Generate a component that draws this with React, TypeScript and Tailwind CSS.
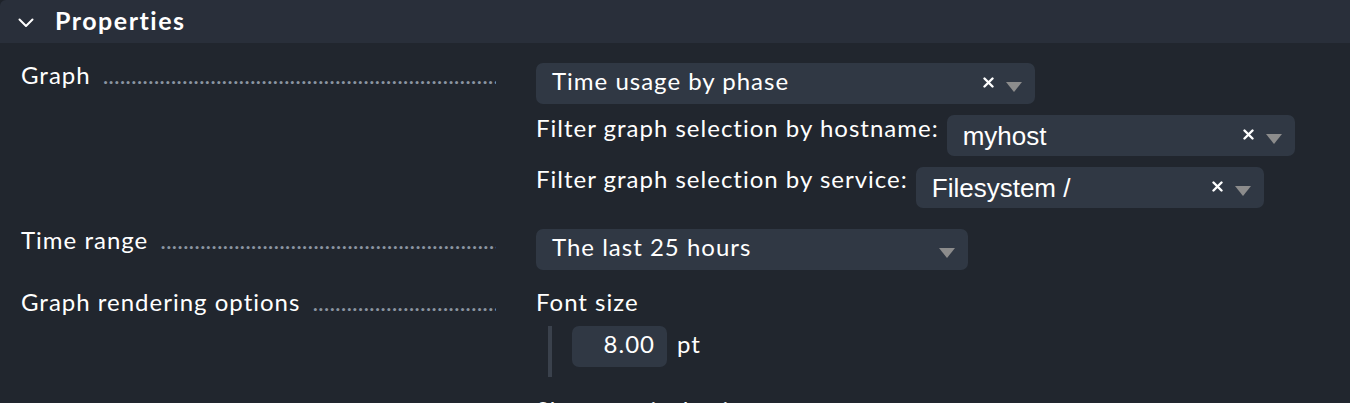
import React from "react"

const DOTS = ".".repeat(160)

function Label({ text, className = "" }: { text: string; className?: string }) {
  return (
    <div className={`flex w-[475px] leading-[30px] ${className}`}>
      <span className="shrink-0">{text}</span>
      <span className="ml-[12px] min-w-0 flex-1 overflow-hidden whitespace-nowrap tracking-normal text-[#8b95a1]">{DOTS}</span>
    </div>
  )
}

function ClearIcon() {
  return (
    <svg width="11" height="11" viewBox="0 0 11 11" className="shrink-0">
      <path d="M1.5 1.5 L9.5 9.5 M9.5 1.5 L1.5 9.5" stroke="#ffffff" strokeWidth="2.4" strokeLinecap="round" />
    </svg>
  )
}

function Caret() {
  return (
    <svg width="16" height="10" viewBox="0 0 16 10" className="mt-[5px] shrink-0">
      <polygon points="0,0 16,0 8,10" fill="#8c8c8c" />
    </svg>
  )
}

function Select({
  value,
  className,
  textClass,
  clearable = true,
}: {
  value: string
  className: string
  textClass: string
  clearable?: boolean
}) {
  return (
    <div className={`flex h-[41px] shrink-0 rounded-[7px] bg-[#303844] pl-[16px] pr-[13px] ${className}`}>
      <div className={`flex flex-1 items-center ${textClass}`}>{value}</div>
      <div className="flex items-start gap-[12px] pt-[14px]">
        {clearable && <ClearIcon />}
        <Caret />
      </div>
    </div>
  )
}

export default function App() {
  return (
    <div className="h-[403px] overflow-hidden bg-[#1e232a] text-white" style={{ fontFamily: "Lato, 'Noto Sans', sans-serif" }}>
      <div className="min-h-full rounded-tl-[6px] bg-[#21262e] text-[24px] tracking-[1px]">
        {/* header */}
        <div className="flex h-[43px] items-center rounded-tl-[6px] bg-[#292f3a] pb-[3px]">
          <svg width="16" height="10" viewBox="0 0 16 10" className="ml-[18px] mt-[6px]">
            <path d="M1.5 1.5 L8 8 L14.5 1.5" stroke="#ffffff" strokeWidth="2" fill="none" strokeLinecap="round" strokeLinejoin="round" />
          </svg>
          <span className="ml-[21px] text-[25px] font-bold leading-[30px] tracking-[1.5px]">Properties</span>
        </div>

        <div className="pt-[17px]">
          {/* Graph */}
          <div className="flex items-start">
            <div className="w-[536px] shrink-0 pl-[21px]">
              <Label text="Graph" />
            </div>
            <div className="flex flex-col">
              <Select value="Time usage by phase" className="mt-[3px] w-[499px]" textClass="pb-[5px] leading-[30px]" />
              <div className="mt-[9px] flex items-start gap-[8px]">
                <span className="leading-[30px]">Filter graph selection by hostname:</span>
                <Select
                  value="myhost"
                  className="mt-[2px] w-[348px]"
                  textClass="text-[26px] leading-[30px] tracking-normal font-['Liberation_Sans',Arial,sans-serif]"
                />
              </div>
              <div className="mt-[8px] flex items-start gap-[8px]">
                <span className="leading-[30px]">Filter graph selection by service:</span>
                <Select
                  value="Filesystem /"
                  className="mt-[3px] w-[348px]"
                  textClass="text-[26px] leading-[30px] tracking-normal font-['Liberation_Sans',Arial,sans-serif]"
                />
              </div>
            </div>
          </div>

          {/* Time range */}
          <div className="mt-[17px] flex items-start">
            <div className="w-[536px] shrink-0 pl-[21px]">
              <Label text="Time range" />
            </div>
            <Select
              value="The last 25 hours"
              className="mt-[4px] w-[432px]"
              textClass="pb-[5px] leading-[30px]"
              clearable={false}
            />
          </div>

          {/* Graph rendering options */}
          <div className="mt-[17px] flex items-start">
            <div className="w-[536px] shrink-0 pl-[21px]">
              <Label text="Graph rendering options" />
            </div>
            <div className="flex flex-col">
              <span className="leading-[30px]">Font size</span>
              <div className="mt-[9px] flex items-start pl-[12px]">
                <div className="h-[51px] w-[4px] bg-[#3a414c]" />
                <div className="ml-[20px] flex h-[41px] w-[95px] items-center justify-end rounded-[7px] bg-[#303844] pb-[5px] pr-[12px] leading-[30px]">
                  8.00
                </div>
                <span className="ml-[10px] flex h-[41px] items-center pb-[5px] leading-[30px]">pt</span>
              </div>
              <span className="mt-[18px] leading-[30px]">Show vertical axis</span>
            </div>
          </div>
        </div>
      </div>
    </div>
  )
}
